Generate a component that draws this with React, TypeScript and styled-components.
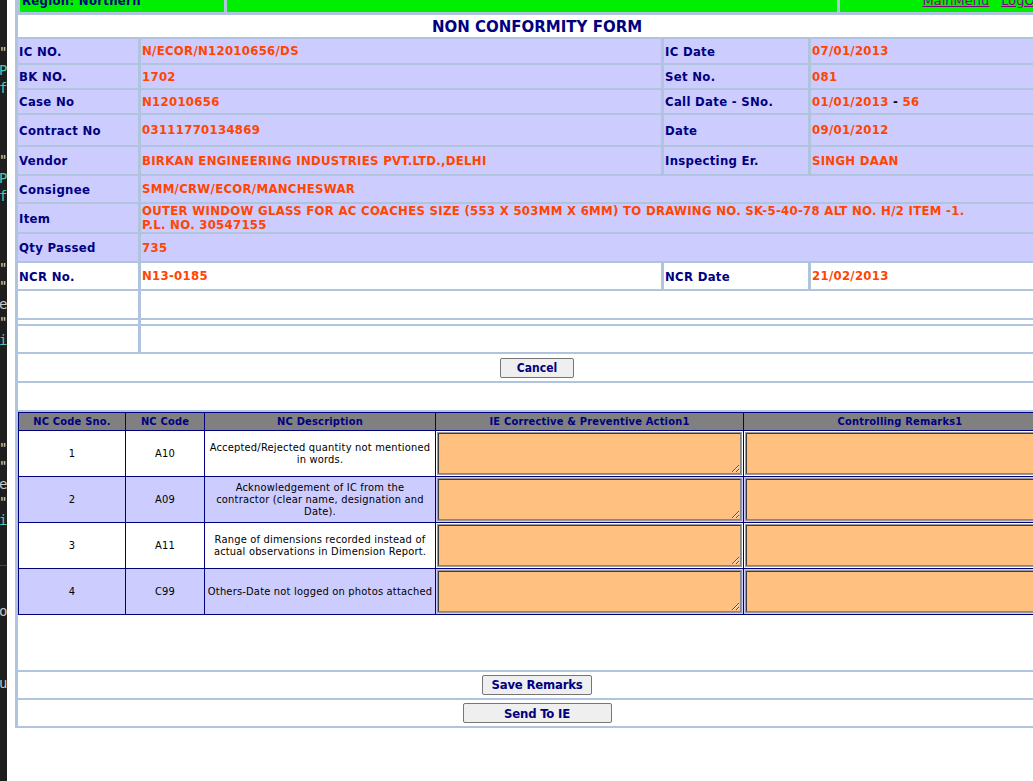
import React from 'react'
import styled, { createGlobalStyle } from 'styled-components'

const GlobalStyle = createGlobalStyle`
  html, body {
    margin: 0;
    padding: 0;
    background: #fff;
    overflow: hidden;
  }
  body {
    font-family: "DejaVu Sans", Verdana, sans-serif;
  }
`

const Screen = styled.div`
  display: flex;
  width: 1033px;
  height: 781px;
  overflow: hidden;
`

const Editor = styled.div`
  width: 7px;
  flex: none;
  background: #1e1e1e;
  overflow: hidden;
  padding-top: 7px;
  font-family: "DejaVu Sans Mono", monospace;
  font-size: 14px;
  display: flex;
  flex-direction: column;
`

const CodeLine = styled.div<{ $color: string; $rule?: boolean }>`
  height: 18px;
  line-height: 18px;
  flex: none;
  white-space: pre;
  color: ${p => p.$color};
  border-top: ${p => (p.$rule ? '1px solid #454545' : 'none')};
  margin-left: -1px;
`

const Page = styled.div`
  flex: 1;
  min-width: 0;
  margin-top: -14px;
  padding-left: 8px;
  overflow: hidden;
`

const FormTable = styled.table`
  width: 1044px;
  table-layout: fixed;
  border-collapse: separate;
  border-spacing: 3px 2px;
  background: #b0c4de;
  font-size: 13px;
  font-stretch: condensed;
  letter-spacing: 0.3px;
`

const Row = styled.tr<{ $h: number }>`
  height: ${p => p.$h}px;
`

const HeaderCell = styled.td`
  padding: 0 0 1px 2px;
`

const HeaderBar = styled.div`
  display: flex;
  gap: 3px;
`

const Green = styled.div<{ $w?: number; $right?: boolean }>`
  ${p => (p.$w ? `width: ${p.$w}px; flex: none;` : 'flex: 1;')}
  height: 24px;
  background: #00ee00;
  display: flex;
  align-items: center;
  justify-content: ${p => (p.$right ? 'flex-end' : 'flex-start')};
  gap: 12px;
  padding: 0 ${p => (p.$right ? '8px' : '2px')} 0 2px;
  box-sizing: border-box;
  color: #000080;
  font-weight: bold;
  font-size: 13px;
`

const NavLink = styled.a`
  color: #800080;
  font-weight: normal;
  font-stretch: normal;
  letter-spacing: 0;
  text-decoration: underline;
  cursor: pointer;
`

const TitleCell = styled.td`
  background: #fff;
  text-align: center;
  color: #000080;
  font-weight: bold;
  font-size: 15px;
  font-stretch: normal;
  letter-spacing: 0;
  padding: 1px 0 0;
`

const Cell = styled.td<{ $white?: boolean }>`
  background: ${p => (p.$white ? '#fff' : '#ccccff')};
  padding: 0 1px;
  vertical-align: middle;
  overflow: hidden;
  white-space: nowrap;
`

const Label = styled(Cell)`
  color: #000080;
  font-weight: bold;
`

const Value = styled(Cell)`
  color: #ff4500;
  font-weight: bold;
  line-height: 14px;
`

const Dash = styled.span`
  color: #000;
`

const CenterCell = styled.td`
  background: #fff;
  text-align: center;
  padding: 0;
  vertical-align: middle;
  line-height: 20px;
`

const Button = styled.button<{ $w?: number; $narrow?: boolean }>`
  height: 20px;
  ${p => (p.$w ? `width: ${p.$w}px;` : `padding: 0 ${p.$narrow ? 8 : 16}px;`)}
  background: #efefef;
  border: 1px solid #767676;
  border-radius: 2px;
  color: #000080;
  font-weight: bold;
  font-family: "DejaVu Sans", Verdana, sans-serif;
  font-size: ${p => (p.$narrow ? '13px' : '12px')};
  font-stretch: condensed;
  letter-spacing: ${p => (p.$narrow ? '-0.2px' : '0')};
  line-height: 18px;
  vertical-align: middle;
  cursor: pointer;
`

const NcCell = styled.td`
  background: #fff;
  padding: 0 0 55px 0;
  vertical-align: top;
`

const NcTable = styled.table`
  width: 1038px;
  table-layout: fixed;
  border-collapse: collapse;
  border: 1px solid #000080;
  font-size: 11px;
  font-stretch: condensed;
  letter-spacing: 0.2px;
`

const NcHead = styled.th`
  height: 17px;
  background: #808080;
  color: #000080;
  font-weight: bold;
  border: 1px solid #000080;
  padding: 0;
  white-space: nowrap;
`

const NcRow = styled.tr<{ $alt: boolean }>`
  background: ${p => (p.$alt ? '#ccccff' : '#fff')};
`

const NcData = styled.td`
  height: 45px;
  border: 1px solid #000080;
  text-align: center;
  vertical-align: middle;
  color: #000;
  line-height: 12px;
  padding: 0 2px;
  white-space: nowrap;
`

const NcInputCell = styled.td`
  border: 1px solid #000080;
  padding: 1px 2px;
  vertical-align: middle;
`

const Remark = styled.textarea`
  display: block;
  box-sizing: border-box;
  width: 100%;
  height: 41px;
  background: #ffc080;
  border: 1px solid #858585;
  border-top-color: #3c3c3c;
  border-left-color: #3c3c3c;
  box-shadow: 0 0 0 1px #9a9a9a;
  margin: 0;
  font-family: "DejaVu Sans Mono", monospace;
  font-size: 12px;
`

const editorLines: Record<number, [string, string]> = {
  2: ['"', '#d4d4d4'],
  3: ['P', '#4ec9b0'],
  4: ['f', '#4ec9b0'],
  8: ['"', '#d4d4d4'],
  9: ['P', '#4ec9b0'],
  10: ['f', '#4ec9b0'],
  14: ['"', '#d4d4d4'],
  15: ['"', '#d4d4d4'],
  16: ['e', '#c8c8c8'],
  17: ['"', '#d4d4d4'],
  18: ['i', '#4ec9b0'],
  24: ['"', '#d4d4d4'],
  25: ['"', '#d4d4d4'],
  26: ['e', '#c8c8c8'],
  27: ['"', '#d4d4d4'],
  28: ['i', '#4ec9b0'],
  33: ['o', '#c8c8c8'],
  37: ['u', '#c8c8c8'],
}

type Info = { label: string; value: React.ReactNode; label2?: string; value2?: React.ReactNode; h: number }

const infoRows: Info[] = [
  { label: 'IC NO.', value: 'N/ECOR/N12010656/DS', label2: 'IC Date', value2: '07/01/2013', h: 24 },
  { label: 'BK NO.', value: '1702', label2: 'Set No.', value2: '081', h: 23 },
  {
    label: 'Case No',
    value: 'N12010656',
    label2: 'Call Date - SNo.',
    value2: (
      <>
        01/01/2013 <Dash>-</Dash> 56
      </>
    ),
    h: 23,
  },
  { label: 'Contract No', value: '03111770134869', label2: 'Date', value2: '09/01/2012', h: 30 },
  { label: 'Vendor', value: 'BIRKAN ENGINEERING INDUSTRIES PVT.LTD.,DELHI', label2: 'Inspecting Er.', value2: 'SINGH DAAN', h: 27 },
  { label: 'Consignee', value: 'SMM/CRW/ECOR/MANCHESWAR', h: 26 },
  {
    label: 'Item',
    value: (
      <>
        OUTER WINDOW GLASS FOR AC COACHES SIZE (553 X 503MM X 6MM) TO DRAWING NO. SK-5-40-78 ALT NO. H/2 ITEM -1.
        <br />
        P.L. NO. 30547155
      </>
    ),
    h: 28,
  },
  { label: 'Qty Passed', value: '735', h: 27 },
]

const ncRows = [
  { sno: '1', code: 'A10', desc: ['Accepted/Rejected quantity not mentioned', 'in words.'] },
  { sno: '2', code: 'A09', desc: ['Acknowledgement of IC from the', 'contractor (clear name, designation and', 'Date).'] },
  { sno: '3', code: 'A11', desc: ['Range of dimensions recorded instead of', 'actual observations in Dimension Report.'] },
  { sno: '4', code: 'C99', desc: ['Others-Date not logged on photos attached'] },
]

export default function App() {
  return (
    <>
      <GlobalStyle />
      <Screen>
        <Editor>
          {Array.from({ length: 43 }, (_, i) => {
            const entry = editorLines[i]
            return (
              <CodeLine key={i} $color={entry ? entry[1] : '#d4d4d4'} $rule={i === 31}>
                {entry ? entry[0] : ' '}
              </CodeLine>
            )
          })}
        </Editor>
        <Page>
          <FormTable>
            <colgroup>
              <col style={{ width: 120 }} />
              <col style={{ width: 520 }} />
              <col style={{ width: 144 }} />
              <col style={{ width: 245 }} />
            </colgroup>
            <tbody>
              <tr>
                <HeaderCell colSpan={4}>
                  <HeaderBar>
                    <Green $w={204}>Region: Northern</Green>
                    <Green $w={610} />
                    <Green $right>
                      <NavLink>MainMenu</NavLink>
                      <NavLink>LogOut</NavLink>
                    </Green>
                  </HeaderBar>
                </HeaderCell>
              </tr>
              <Row $h={22}>
                <TitleCell colSpan={4}>NON CONFORMITY FORM</TitleCell>
              </Row>
              {infoRows.map(r => (
                <Row $h={r.h} key={r.label}>
                  <Label>{r.label}</Label>
                  {r.label2 ? (
                    <>
                      <Value>{r.value}</Value>
                      <Label>{r.label2}</Label>
                      <Value>{r.value2}</Value>
                    </>
                  ) : (
                    <Value colSpan={3}>{r.value}</Value>
                  )}
                </Row>
              ))}
              <Row $h={26}>
                <Label $white>NCR No.</Label>
                <Value $white>N13-0185</Value>
                <Label $white>NCR Date</Label>
                <Value $white>21/02/2013</Value>
              </Row>
              <Row $h={27}>
                <Cell $white />
                <Cell $white colSpan={3} />
              </Row>
              <Row $h={4}>
                <Cell $white />
                <Cell $white colSpan={3} />
              </Row>
              <Row $h={26}>
                <Cell $white />
                <Cell $white colSpan={3} />
              </Row>
              <Row $h={27}>
                <CenterCell colSpan={4}>
                  <Button>Cancel</Button>
                </CenterCell>
              </Row>
              <Row $h={27}>
                <CenterCell colSpan={4} />
              </Row>
              <tr>
                <NcCell colSpan={4}>
                  <NcTable>
                    <colgroup>
                      <col style={{ width: 107 }} />
                      <col style={{ width: 79 }} />
                      <col style={{ width: 231 }} />
                      <col style={{ width: 308 }} />
                      <col style={{ width: 313 }} />
                    </colgroup>
                    <thead>
                      <tr>
                        <NcHead>NC Code Sno.</NcHead>
                        <NcHead>NC Code</NcHead>
                        <NcHead>NC Description</NcHead>
                        <NcHead>IE Corrective &amp; Preventive Action1</NcHead>
                        <NcHead>Controlling Remarks1</NcHead>
                      </tr>
                    </thead>
                    <tbody>
                      {ncRows.map((r, i) => (
                        <NcRow $alt={i % 2 === 1} key={r.sno}>
                          <NcData>{r.sno}</NcData>
                          <NcData>{r.code}</NcData>
                          <NcData>
                            {r.desc.map((line, j) => (
                              <React.Fragment key={j}>
                                {j > 0 && <br />}
                                {line}
                              </React.Fragment>
                            ))}
                          </NcData>
                          <NcInputCell>
                            <Remark />
                          </NcInputCell>
                          <NcInputCell>
                            <Remark />
                          </NcInputCell>
                        </NcRow>
                      ))}
                    </tbody>
                  </NcTable>
                </NcCell>
              </tr>
              <Row $h={26}>
                <CenterCell colSpan={4}>
                  <Button $narrow>Save Remarks</Button>
                </CenterCell>
              </Row>
              <Row $h={26}>
                <CenterCell colSpan={4}>
                  <Button $narrow $w={149}>Send To IE</Button>
                </CenterCell>
              </Row>
            </tbody>
          </FormTable>
        </Page>
      </Screen>
    </>
  )
}
